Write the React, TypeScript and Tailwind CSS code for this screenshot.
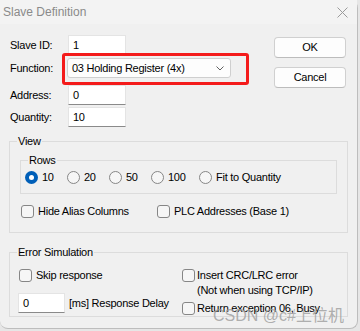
import React from 'react';

const font = { fontFamily: '"Liberation Sans", Arial, sans-serif' };

const GroupBox: React.FC<{ title: string; className?: string; children?: React.ReactNode }> = ({ title, className, children }) => (
  <div className={`relative border border-[#dcdcdc] ${className ?? ''}`}>
    <span className="absolute -top-[8px] left-[7px] bg-[#f0f0f0] px-[1px] text-[11px] leading-[14px] tracking-[-0.25px] text-black">
      {title}
    </span>
    {children}
  </div>
);

const Radio: React.FC<{ checked?: boolean }> = ({ checked }) =>
  checked ? (
    <span className="flex h-[13px] w-[13px] items-center justify-center rounded-full bg-[#005fb8]">
      <span className="h-[5px] w-[5px] rounded-full bg-white" />
    </span>
  ) : (
    <span className="h-[13px] w-[13px] rounded-full border border-[#868686] bg-[#f6f6f6]" />
  );

const Check = () => <span className="h-[13px] w-[13px] shrink-0 rounded-[3px] border border-[#868686] bg-[#f6f6f6]" />;

const TextBox: React.FC<{ value: string; w: string }> = ({ value, w }) => (
  <div className={`flex h-[20px] ${w} items-center border border-[#e4e4e4] border-b-[#8a8a8a] bg-white pl-[4px] text-[11px] tracking-[-0.25px] text-black`}>
    {value}
  </div>
);

const Button: React.FC<{ label: string }> = ({ label }) => (
  <div className="flex h-[21px] w-[72px] items-center justify-center rounded-[4px] border border-[#d0d0d0] border-b-[#bcbcbc] bg-[#fdfdfd] text-[11px] tracking-[-0.25px] text-black">
    {label}
  </div>
);

export default function App() {
  const rows = [
    { label: '10', w: 'w-[42px]', checked: true },
    { label: '20', w: 'w-[42px]' },
    { label: '50', w: 'w-[42px]' },
    { label: '100', w: 'w-[48px]' },
    { label: 'Fit to Quantity', w: '' },
  ];

  return (
    <div className="h-[331px] w-[360px] overflow-hidden bg-[#e6e6e6]" style={font}>
      <div className="relative flex h-[329px] w-[358px] flex-col rounded-tr-[8px] rounded-b-[8px] border-r border-b border-[#bdbdbd] bg-[#f0f0f0] text-[11px] text-black">
        {/* title bar */}
        <div className="flex h-[24px] items-center justify-between bg-[#f3f3f3] pl-[3px] pr-[9px]">
          <span className="text-[12px] text-[#8a8a8a]">Slave Definition</span>
          <svg width="11" height="11" viewBox="0 0 11 11">
            <path d="M0.5 0.5 L10.5 10.5 M10.5 0.5 L0.5 10.5" stroke="#9a9a9a" strokeWidth="1" />
          </svg>
        </div>

        {/* top fields + buttons */}
        <div className="flex">
          <div className="grid w-[274px] grid-cols-[58px_1fr] items-center pl-[10px] pt-[11px] tracking-[-0.25px]">
            <span>Slave ID:</span>
            <TextBox value="1" w="w-[58px]" />
            <span className="mt-[3px]">Function:</span>
            <div className="-ml-px mt-[3px] flex h-[20px] w-[164px] items-center justify-between rounded-[3px] border border-[#cfcfcf] bg-[#fdfdfd] pl-[4px] pr-[6px]">
              <span>03 Holding Register (4x)</span>
              <svg width="8" height="5" viewBox="0 0 8 5">
                <path d="M0.5 0.5 L4 4 L7.5 0.5" fill="none" stroke="#606060" strokeWidth="1" />
              </svg>
            </div>
            <span className="mt-[7px]">Address:</span>
            <div className="mt-[7px]">
              <TextBox value="0" w="w-[58px]" />
            </div>
            <span className="mt-[2px]">Quantity:</span>
            <div className="mt-[2px]">
              <TextBox value="10" w="w-[58px]" />
            </div>
          </div>
          <div className="flex flex-col gap-[9px] pt-[13px]">
            <Button label="OK" />
            <Button label="Cancel" />
          </div>
        </div>

        {/* View */}
        <GroupBox title="View" className="ml-[9px] mt-[14px] h-[92px] w-[339px]">
          <GroupBox title="Rows" className="ml-[10px] mt-[18px] h-[34px] w-[317px]">
            <div className="mt-[10px] flex pl-[4px] tracking-[-0.25px]">
              {rows.map((r) => (
                <div key={r.label} className={`flex h-[13px] items-center gap-[4px] ${r.w}`}>
                  <Radio checked={r.checked} />
                  <span className="leading-[13px]">{r.label}</span>
                </div>
              ))}
            </div>
          </GroupBox>
          <div className="mt-[11px] flex pl-[11px] tracking-[-0.25px]">
            <div className="flex w-[136px] items-center gap-[4px]">
              <Check />
              <span className="leading-[13px]">Hide Alias Columns</span>
            </div>
            <div className="flex items-center gap-[4px]">
              <Check />
              <span className="leading-[13px]">PLC Addresses (Base 1)</span>
            </div>
          </div>
        </GroupBox>

        {/* Error Simulation */}
        <GroupBox title="Error Simulation" className="ml-[9px] mt-[19px] h-[65px] w-[339px]">
          <div className="flex tracking-[-0.25px]">
            <div className="flex w-[172px] flex-col pl-[9px] pt-[16px]">
              <div className="flex items-center gap-[4px]">
                <Check />
                <span className="leading-[13px]">Skip response</span>
              </div>
              <div className="-ml-px mt-[11px] flex items-center gap-[4px]">
                <TextBox value="0" w="w-[47px]" />
                <span>[ms] Response Delay</span>
              </div>
            </div>
            <div className="flex flex-col pt-[16px]">
              <div className="flex items-start gap-[2px]">
                <Check />
                <span className="leading-[15px] -mt-[1px]">
                  Insert CRC/LRC error
                  <br />
                  (Not when using TCP/IP)
                </span>
              </div>
              <div className="mt-[4px] flex items-center gap-[2px]">
                <Check />
                <span className="leading-[13px]">Return exception 06, Busy</span>
              </div>
            </div>
          </div>
        </GroupBox>

        {/* annotation */}
        <div className="absolute left-[62px] top-[53px] h-[32px] w-[187px] rounded-[3px] border-[3px] border-[#f41b1b]" />

        {/* watermark */}
        <span
          className="absolute left-[213px] top-[304px] text-[16px] text-[#9c9c9c]/80"
          style={{ fontFamily: '"Liberation Sans", "Noto Sans CJK SC", sans-serif' }}
        >
          CSDN @c#上位机
        </span>
      </div>
    </div>
  );
}
